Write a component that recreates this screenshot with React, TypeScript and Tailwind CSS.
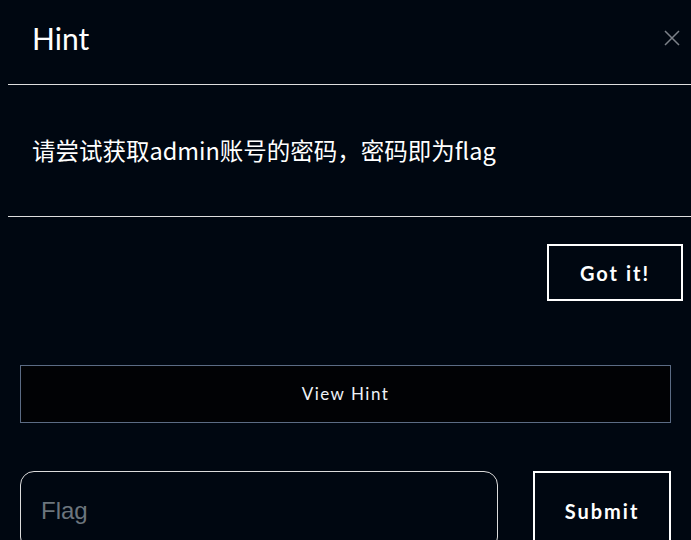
import React from 'react';

const App: React.FC = () => {
  return (
    <div className="w-[691px] h-[540px] overflow-hidden bg-[#000711] text-white font-['Lato','Noto_Sans_CJK_SC',sans-serif]">
      {/* Hint modal */}
      <div className="ml-2">
        <div className="h-[85px] flex items-center justify-between pl-6 pr-[10px] border-b border-[#dedede]">
          <h5 className="text-[30px] leading-none font-normal -mt-2">Hint</h5>
          <button className="text-[#7c8189] -mt-2" aria-label="Close">
            <svg width="18" height="18" viewBox="0 0 18 18" fill="none" stroke="currentColor" strokeWidth="1.5">
              <path d="M2 2 L16 16 M16 2 L2 16" />
            </svg>
          </button>
        </div>
        <div className="h-[132px] flex items-center pl-6 border-b border-[#dedede]">
          <p className="text-[23.5px] leading-none font-['Noto_Sans_CJK_SC',sans-serif]">请尝试获取admin账号的密码，密码即为flag</p>
        </div>
        <div className="flex justify-end pr-2 pt-[27px]">
          <button className="w-[136px] h-[57px] border-2 border-white bg-[#000711] text-[20px] font-bold tracking-[2px]">
            Got it!
          </button>
        </div>
      </div>

      {/* Page content */}
      <div className="px-5 mt-[64px]">
        <button className="w-full h-[58px] border border-[#5b6b84] bg-[#010205] text-[17px] tracking-[1.5px] text-[#eef2f7]">
          View Hint
        </button>
        <div className="flex gap-[35px] mt-[48px]">
          <input
            placeholder="Flag"
            className="w-[478px] shrink-0 h-[80px] rounded-[14px] border border-[#dcdcdc] bg-[#000711] px-5 text-[24px] font-['Liberation_Sans',sans-serif] placeholder:text-[#6c757d] outline-none"
          />
          <button className="w-[138px] shrink-0 h-[80px] border-2 border-white bg-[#000711] text-[20px] font-bold tracking-[2px]">
            Submit
          </button>
        </div>
      </div>
    </div>
  );
};

export default App;
